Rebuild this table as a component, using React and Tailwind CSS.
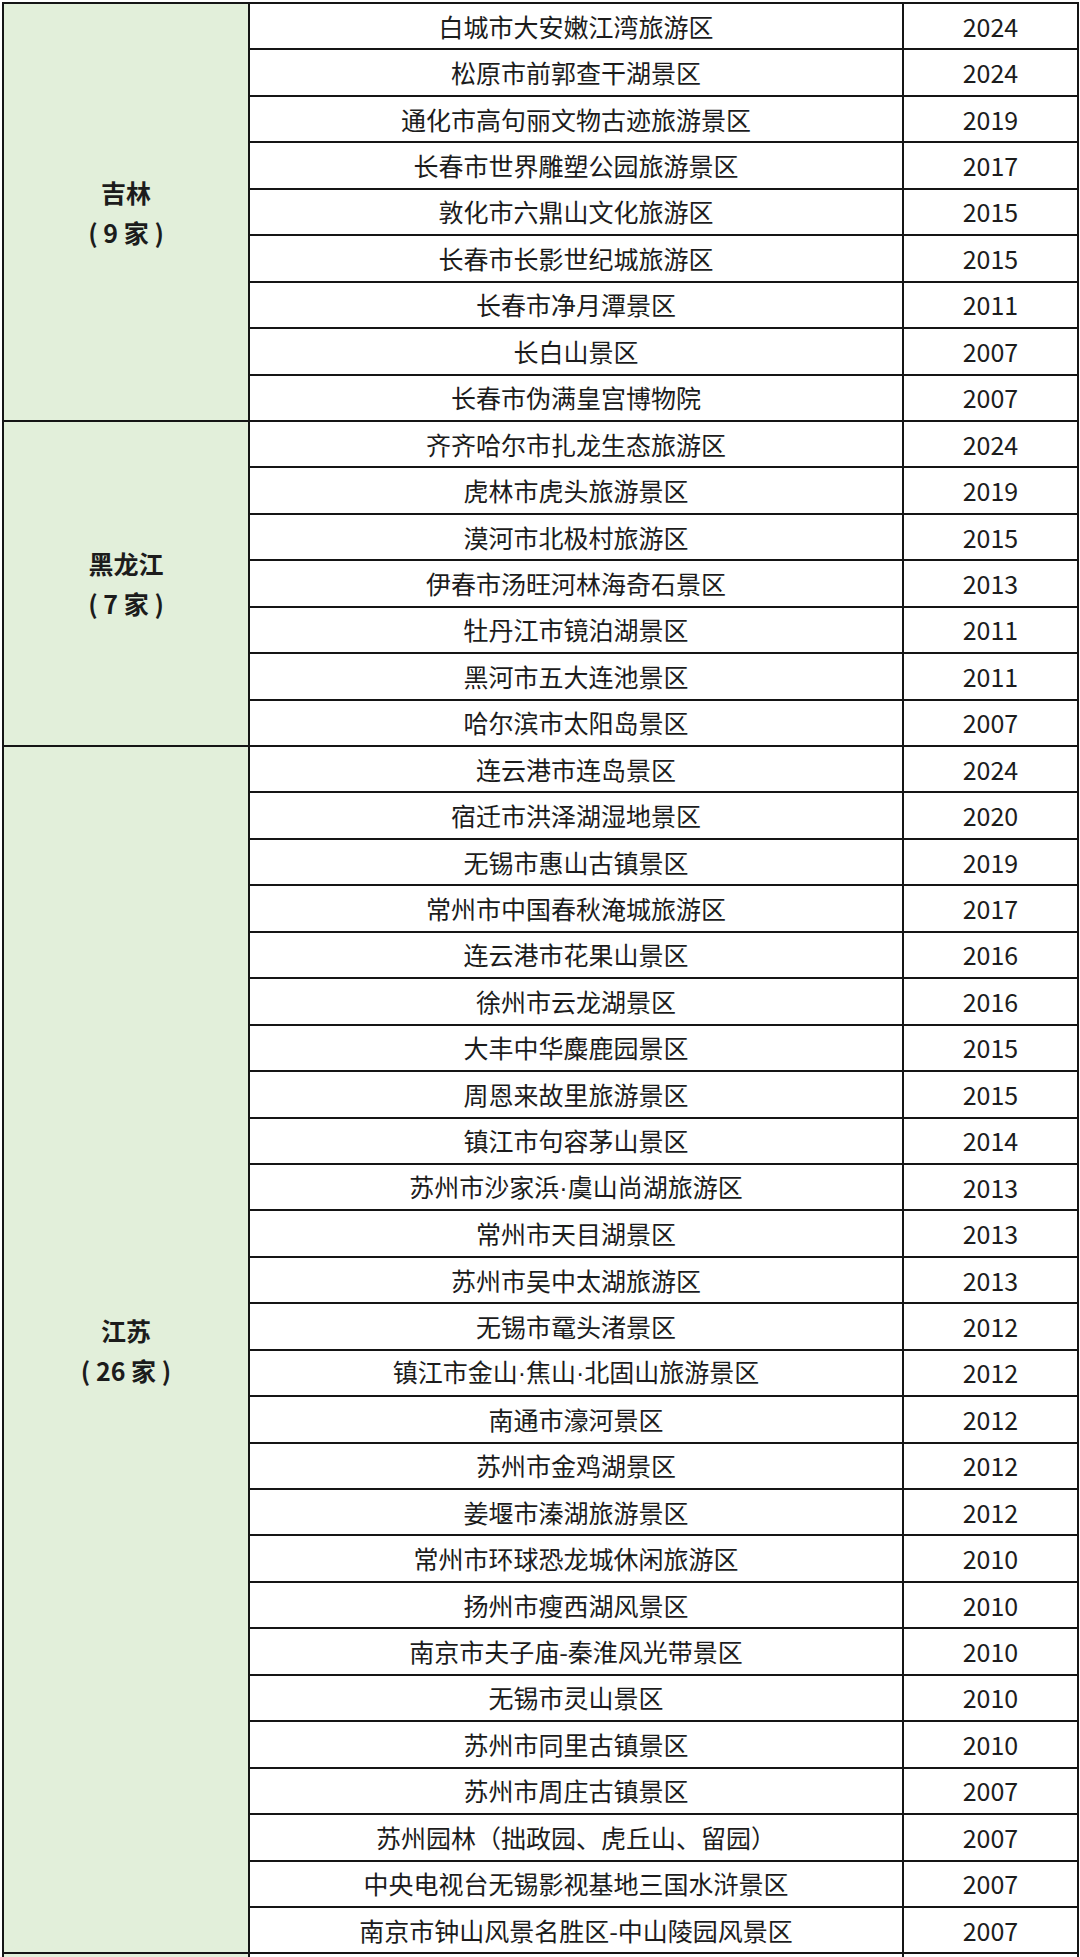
const groups = [
  {
    name: "吉林",
    count: "( 9 家 )",
    rows: [
      ["白城市大安嫩江湾旅游区", "2024"],
      ["松原市前郭查干湖景区", "2024"],
      ["通化市高句丽文物古迹旅游景区", "2019"],
      ["长春市世界雕塑公园旅游景区", "2017"],
      ["敦化市六鼎山文化旅游区", "2015"],
      ["长春市长影世纪城旅游区", "2015"],
      ["长春市净月潭景区", "2011"],
      ["长白山景区", "2007"],
      ["长春市伪满皇宫博物院", "2007"],
    ],
  },
  {
    name: "黑龙江",
    count: "( 7 家 )",
    rows: [
      ["齐齐哈尔市扎龙生态旅游区", "2024"],
      ["虎林市虎头旅游景区", "2019"],
      ["漠河市北极村旅游区", "2015"],
      ["伊春市汤旺河林海奇石景区", "2013"],
      ["牡丹江市镜泊湖景区", "2011"],
      ["黑河市五大连池景区", "2011"],
      ["哈尔滨市太阳岛景区", "2007"],
    ],
  },
  {
    name: "江苏",
    count: "( 26 家 )",
    rows: [
      ["连云港市连岛景区", "2024"],
      ["宿迁市洪泽湖湿地景区", "2020"],
      ["无锡市惠山古镇景区", "2019"],
      ["常州市中国春秋淹城旅游区", "2017"],
      ["连云港市花果山景区", "2016"],
      ["徐州市云龙湖景区", "2016"],
      ["大丰中华麋鹿园景区", "2015"],
      ["周恩来故里旅游景区", "2015"],
      ["镇江市句容茅山景区", "2014"],
      ["苏州市沙家浜·虞山尚湖旅游区", "2013"],
      ["常州市天目湖景区", "2013"],
      ["苏州市吴中太湖旅游区", "2013"],
      ["无锡市鼋头渚景区", "2012"],
      ["镇江市金山·焦山·北固山旅游景区", "2012"],
      ["南通市濠河景区", "2012"],
      ["苏州市金鸡湖景区", "2012"],
      ["姜堰市溱湖旅游景区", "2012"],
      ["常州市环球恐龙城休闲旅游区", "2010"],
      ["扬州市瘦西湖风景区", "2010"],
      ["南京市夫子庙-秦淮风光带景区", "2010"],
      ["无锡市灵山景区", "2010"],
      ["苏州市同里古镇景区", "2010"],
      ["苏州市周庄古镇景区", "2007"],
      ["苏州园林（拙政园、虎丘山、留园）", "2007"],
      ["中央电视台无锡影视基地三国水浒景区", "2007"],
      ["南京市钟山风景名胜区-中山陵园风景区", "2007"],
    ],
  },
];

const cell = "border-2 border-[#151515] h-[46.45px] p-0 text-center align-middle";

// the narrow middle dot needs a latin face, the CJK one is full width
function Name({ text }) {
  const parts = text.split("·");
  return parts.map((p, i) => (
    <span key={i}>
      {i > 0 && <span className="font-['Liberation_Sans']">·</span>}
      {p}
    </span>
  ));
}

export default function App() {
  return (
    <div
      className="w-[1080px] h-[1957px] overflow-hidden bg-white text-[#1c1c1c]"
      style={{ fontFamily: '"Noto Sans CJK SC", "Noto Sans", sans-serif' }}
    >
      <table className="table-fixed border-collapse w-[1075px] ml-[2px] mt-[2px] text-[25px] leading-none">
        <colgroup>
          <col className="w-[246px]" />
          <col className="w-[654px]" />
          <col className="w-[175px]" />
        </colgroup>
        <tbody>
          {groups.map((g) =>
            g.rows.map((r, i) => (
              <tr key={g.name + i}>
                {i === 0 && (
                  <td rowSpan={g.rows.length} className={`${cell} bg-[#e2efda] font-bold`}>
                    <div className="leading-[40px]">{g.name}</div>
                    <div className="leading-[40px] whitespace-pre">{g.count}</div>
                  </td>
                )}
                <td className={cell}>
                  <Name text={r[0]} />
                </td>
                <td className={cell}>{r[1]}</td>
              </tr>
            ))
          )}
          <tr>
            <td className={`${cell} bg-[#e2efda]`}></td>
            <td className={cell}></td>
            <td className={cell}></td>
          </tr>
        </tbody>
      </table>
    </div>
  );
}
